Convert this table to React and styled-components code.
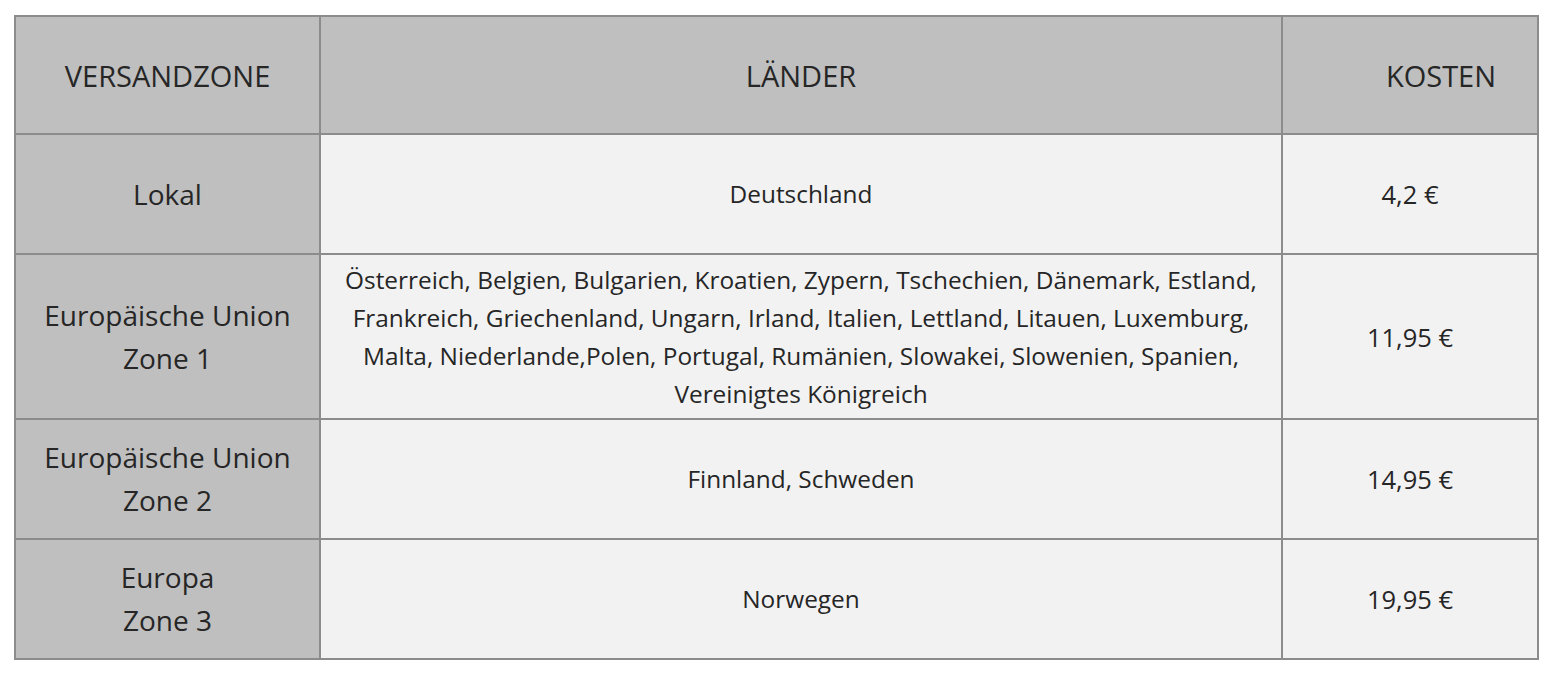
import React from "react";
import styled, { createGlobalStyle } from "styled-components";

const GlobalStyle = createGlobalStyle`
  html, body {
    margin: 0;
    padding: 0;
    background: #ffffff;
  }
  body {
    font-family: "Open Sans", "Noto Sans", sans-serif;
    color: #262626;
  }
`;

const Page = styled.div`
  padding: 15px 15px 0 14px;
`;

const Table = styled.table`
  border-collapse: collapse;
  table-layout: fixed;
  width: 1525px;
`;

const HeadCell = styled.th`
  background: #bfbfbf;
  border: 2px solid #8c8c8c;
  height: 116px;
  font-weight: 400;
  font-size: 29px;
  text-align: center;
  padding: 0 0 0 ${(p) => p.$indent || 0}px;
`;

const ZoneCell = styled.td`
  background: #bfbfbf;
  border: 2px solid #8c8c8c;
  font-size: 28px;
  line-height: 43px;
  text-align: center;
  padding: 0 6px;
`;

const Cell = styled.td`
  background: #f2f2f2;
  border: 2px solid #8c8c8c;
  font-size: ${(p) => p.$size || 24.4}px;
  line-height: 38px;
  text-align: center;
  padding: 0 12px;
`;

const Row = styled.tr`
  height: ${(p) => p.$height}px;
`;

const rows = [
  { zone: ["Lokal"], countries: "Deutschland", cost: "4,2 €", height: 120 },
  {
    zone: ["Europäische Union", "Zone 1"],
    countries:
      "Österreich, Belgien, Bulgarien, Kroatien, Zypern, Tschechien, Dänemark, Estland, Frankreich, Griechenland, Ungarn, Irland, Italien, Lettland, Litauen, Luxemburg, Malta, Niederlande,Polen, Portugal, Rumänien, Slowakei, Slowenien, Spanien, Vereinigtes Königreich",
    cost: "11,95 €",
    height: 165,
  },
  { zone: ["Europäische Union", "Zone 2"], countries: "Finnland, Schweden", cost: "14,95 €", height: 120 },
  { zone: ["Europa", "Zone 3"], countries: "Norwegen", cost: "19,95 €", height: 120 },
];

export default function App() {
  return (
    <Page>
      <GlobalStyle />
      <Table>
        <colgroup>
          <col style={{ width: 305 }} />
          <col style={{ width: 962 }} />
          <col style={{ width: 256 }} />
        </colgroup>
        <thead>
          <tr>
            <HeadCell>VERSANDZONE</HeadCell>
            <HeadCell>LÄNDER</HeadCell>
            <HeadCell $indent={62}>KOSTEN</HeadCell>
          </tr>
        </thead>
        <tbody>
          {rows.map((r) => (
            <Row key={r.cost} $height={r.height}>
              <ZoneCell>
                {r.zone.map((z, i) => (
                  <React.Fragment key={z}>
                    {i > 0 && <br />}
                    {z}
                  </React.Fragment>
                ))}
              </ZoneCell>
              <Cell>{r.countries}</Cell>
              <Cell $size={25.5}>{r.cost}</Cell>
            </Row>
          ))}
        </tbody>
      </Table>
    </Page>
  );
}
